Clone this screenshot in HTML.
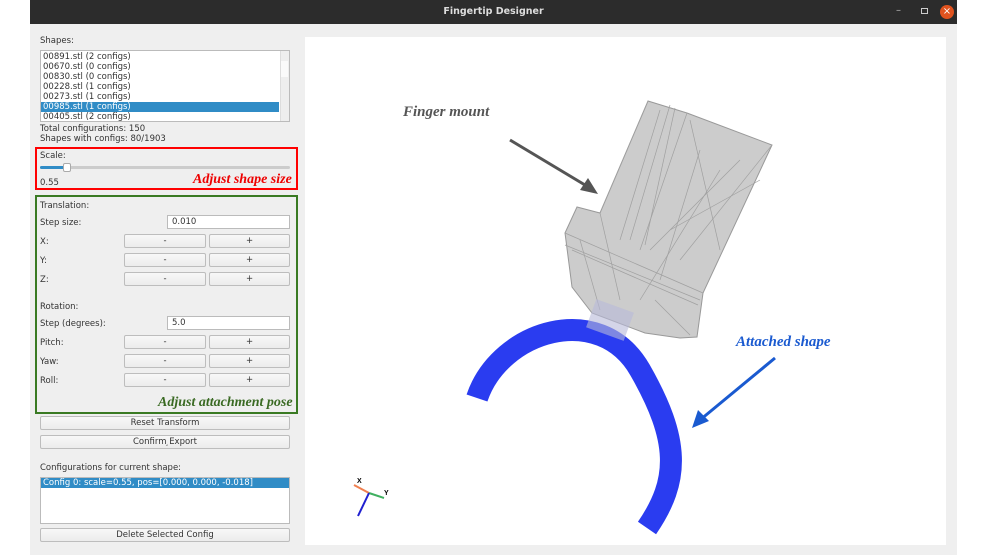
<!DOCTYPE html>
<html><head><meta charset="utf-8"><style>
*{box-sizing:border-box}
body{margin:0;width:987px;height:555px;background:#fff;position:relative;overflow:hidden;font-family:"DejaVu Sans","Liberation Sans",sans-serif;font-size:8.5px;color:#333}
.win{position:absolute;left:30px;top:0;width:927px;height:555px;background:#efefef}
.title{position:absolute;left:0;top:0;width:927px;height:24px;background:#2c2c2c;color:#ddd;font-weight:bold;font-size:9.5px;text-align:center;line-height:24px}
.a{position:absolute}
.btn{position:absolute;height:14px;border:1px solid #bdbdbd;border-radius:2px;background:linear-gradient(#f8f8f8,#ececec);text-align:center;line-height:12px;font-size:8.5px}
.inp{position:absolute;height:14px;border:1px solid #bbb;background:#fff;line-height:12px;padding-left:4px}
.lbl{position:absolute;left:10px}
.ann{font-family:"Liberation Serif",serif;font-style:italic;font-weight:bold;font-size:14px;position:absolute}
</style></head><body>
<div class="win">
<div class="title">Fingertip Designer</div>
<div class="a" style="left:866px;top:5px;color:#bbb;font-size:10px">–</div>
<div class="a" style="left:891px;top:8px;width:7px;height:6px;border:1px solid #ccc"></div>
<div class="a" style="left:910px;top:5px;width:14px;height:14px;border-radius:50%;background:#e0531f;color:#fff;font-size:10px;text-align:center;line-height:14px">×</div>

<div class="lbl" style="top:36px">Shapes:</div>
<div class="a" style="left:10px;top:50px;width:250px;height:72px;background:#fff;border:1px solid #bbb;line-height:10px;padding-top:1px">
<div style="padding-left:2px">00891.stl (2 configs)</div>
<div style="padding-left:2px">00670.stl (0 configs)</div>
<div style="padding-left:2px">00830.stl (0 configs)</div>
<div style="padding-left:2px">00228.stl (1 configs)</div>
<div style="padding-left:2px">00273.stl (1 configs)</div>
<div style="padding-left:2px;background:#308cc6;color:#fff;width:238px">00985.stl (1 configs)</div>
<div style="padding-left:2px">00405.stl (2 configs)</div>
<div class="a" style="right:0;top:0;width:9px;height:70px;background:#eee;border-left:1px solid #ddd"></div>
<div class="a" style="right:1px;top:10px;width:7px;height:16px;background:#fafafa"></div>
</div>
<div class="lbl" style="top:125px;line-height:9.5px">Total configurations: 150<br>Shapes with configs: 80/1903</div>

<div class="a" style="left:5px;top:147px;width:263px;height:43px;border:2px solid #f00"></div>
<div class="lbl" style="top:151px">Scale:</div>
<div class="a" style="left:10px;top:166px;width:250px;height:3px;background:#ccc;border-radius:2px"></div>
<div class="a" style="left:10px;top:166px;width:26px;height:3px;background:#308cc6;border-radius:2px"></div>
<div class="a" style="left:33px;top:163px;width:8px;height:9px;background:#fff;border:1px solid #aaa;border-radius:2px"></div>
<div class="lbl" style="top:178px">0.55</div>
<div class="ann" style="left:163px;top:172px;color:#e00">Adjust shape size</div>

<div class="a" style="left:5px;top:195px;width:263px;height:219px;border:2px solid #3a7a23"></div>
<div class="lbl" style="top:201px">Translation:</div>
<div class="lbl" style="top:218px">Step size:</div>
<div class="inp" style="left:137px;top:215px;width:123px">0.010</div>
<div class="lbl" style="top:237px">X:</div><div class="btn" style="left:94px;top:234px;width:82px">-</div><div class="btn" style="left:179px;top:234px;width:81px">+</div>
<div class="lbl" style="top:256px">Y:</div><div class="btn" style="left:94px;top:253px;width:82px">-</div><div class="btn" style="left:179px;top:253px;width:81px">+</div>
<div class="lbl" style="top:275px">Z:</div><div class="btn" style="left:94px;top:272px;width:82px">-</div><div class="btn" style="left:179px;top:272px;width:81px">+</div>
<div class="lbl" style="top:302px">Rotation:</div>
<div class="lbl" style="top:319px">Step (degrees):</div>
<div class="inp" style="left:137px;top:316px;width:123px">5.0</div>
<div class="lbl" style="top:338px">Pitch:</div><div class="btn" style="left:94px;top:335px;width:82px">-</div><div class="btn" style="left:179px;top:335px;width:81px">+</div>
<div class="lbl" style="top:357px">Yaw:</div><div class="btn" style="left:94px;top:354px;width:82px">-</div><div class="btn" style="left:179px;top:354px;width:81px">+</div>
<div class="lbl" style="top:376px">Roll:</div><div class="btn" style="left:94px;top:373px;width:82px">-</div><div class="btn" style="left:179px;top:373px;width:81px">+</div>
<div class="ann" style="left:128px;top:395px;color:#3a6a23">Adjust attachment pose</div>

<div class="btn" style="left:10px;top:416px;width:250px">Reset Transform</div>
<div class="btn" style="left:10px;top:435px;width:250px">Confirm ̦Export</div>
<div class="lbl" style="top:463px">Configurations for current shape:</div>
<div class="a" style="left:10px;top:477px;width:250px;height:47px;background:#fff;border:1px solid #bbb">
<div style="background:#308cc6;color:#fff;padding-left:2px;line-height:10px">Config 0: scale=0.55, pos=[0.000, 0.000, -0.018]</div></div>
<div class="btn" style="left:10px;top:528px;width:250px">Delete Selected Config</div>

<div class="a" style="left:275px;top:37px;width:641px;height:508px;background:#fff"></div>
</div>

<svg class="a" style="left:0;top:0" width="987" height="555">
<polygon points="648,101 687,113 772,145 703,293 697,337 680,338 645,333 592,313 572,287 565,233 577,207 600,213" fill="#cccccc" stroke="#999" stroke-width="1"/>
<g stroke="#a0a0a0" stroke-width="0.7" fill="none">
<line x1="648" y1="101" x2="600" y2="213"/><line x1="687" y1="113" x2="640" y2="250"/><line x1="772" y1="145" x2="680" y2="260"/>
<line x1="565" y1="233" x2="703" y2="293"/><line x1="572" y1="250" x2="698" y2="305"/><line x1="700" y1="150" x2="660" y2="280"/>
<line x1="660" y1="110" x2="620" y2="240"/><line x1="720" y1="170" x2="640" y2="300"/><line x1="600" y1="213" x2="620" y2="300"/>
<line x1="670" y1="105" x2="630" y2="240"/><line x1="675" y1="108" x2="645" y2="245"/><line x1="740" y1="160" x2="650" y2="250"/>
<line x1="760" y1="180" x2="670" y2="230"/><line x1="580" y1="240" x2="600" y2="310"/><line x1="565" y1="245" x2="700" y2="300"/>
<line x1="690" y1="120" x2="720" y2="250"/><line x1="655" y1="300" x2="690" y2="335"/>
</g>
<path d="M477,398 C500,330 600,300 640,370 S 680,480 647,528" fill="none" stroke="#2a3cf0" stroke-width="22"/>
<rect x="590" y="305" width="40" height="30" fill="#b7b9d8" opacity="0.6" transform="rotate(20 610 320)"/>
<line x1="510" y1="140" x2="590" y2="188" stroke="#555" stroke-width="3"/>
<polygon points="598,194 580,190 588,178" fill="#555"/>
<line x1="775" y1="358" x2="700" y2="420" stroke="#1a5ad0" stroke-width="3"/>
<polygon points="692,428 698,410 709,421" fill="#1a5ad0"/>
<line x1="369" y1="493" x2="354" y2="485" stroke="#f08050" stroke-width="2"/>
<line x1="369" y1="493" x2="384" y2="498" stroke="#40b060" stroke-width="2"/>
<line x1="369" y1="493" x2="358" y2="516" stroke="#2020d0" stroke-width="2"/>
<text x="357" y="483" font-size="7" font-family="Liberation Sans" font-weight="bold">X</text>
<text x="384" y="495" font-size="7" font-family="Liberation Sans" font-weight="bold">Y</text>
</svg>
<div class="ann" style="left:403px;top:104px;color:#555;font-size:15px">Finger mount</div>
<div class="ann" style="left:736px;top:334px;color:#1a5ad0;font-size:15px">Attached shape</div>
</body></html>
